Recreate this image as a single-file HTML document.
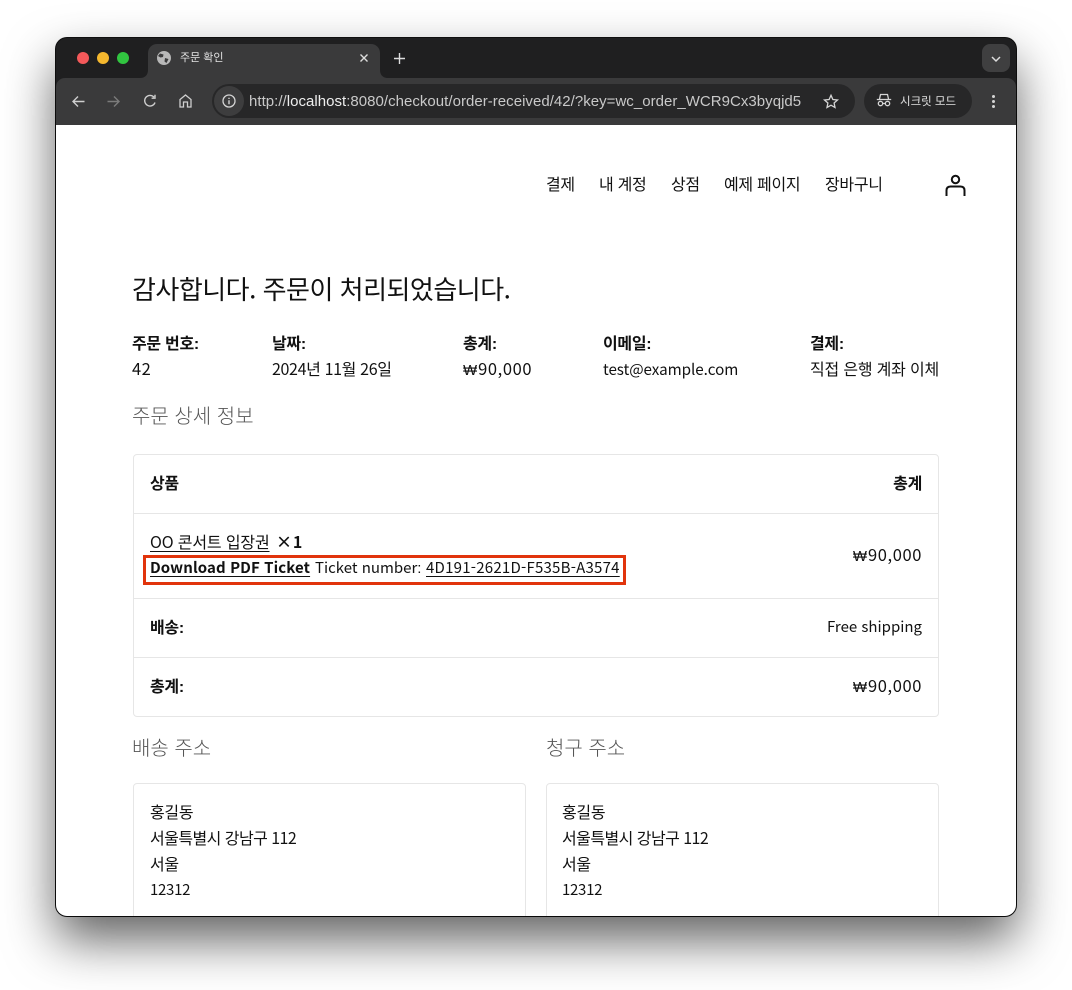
<!DOCTYPE html>
<html lang="ko"><head><meta charset="utf-8"><title>주문 확인</title>
<style>
html,body{margin:0;padding:0;width:1072px;height:990px;overflow:hidden;background:#fff}
*{box-sizing:border-box}
#win{position:absolute;left:56px;top:38px;width:960px;height:878px;border-radius:11px;box-shadow:0 24px 50px rgba(0,0,0,.62),0 0 0 1px #111;overflow:hidden;background:#1f1f20}
.t{position:absolute;white-space:nowrap;font-family:"Noto Sans CJK KR","Liberation Sans",sans-serif;font-size:16px;line-height:22px;color:#111;letter-spacing:-.3px}
.b{font-weight:700}
.u{text-decoration:underline;text-underline-offset:3px;text-decoration-thickness:1px}
.h{font-size:20px;font-weight:300;color:#555;line-height:28px;letter-spacing:0}
.box{position:absolute;border:1px solid #e6e6e6;border-radius:4px}
.ln{position:absolute;height:1px;background:#e6e6e6}
.c{position:absolute;white-space:nowrap;font-family:"Liberation Sans","Noto Sans CJK KR",sans-serif;color:#d9d9d9}
.m{font-size:16.5px;letter-spacing:.6px}
.m i{font-style:normal;font-family:"Liberation Sans","DejaVu Sans",sans-serif;font-size:15px;letter-spacing:1px}
.k{font-family:"Liberation Sans",sans-serif}
svg{position:absolute;overflow:visible}
</style></head><body>
<div id="win">
 <div style="position:absolute;left:0;top:40px;width:960px;height:47px;background:#3a3a3b;border-radius:9px 9px 0 0"></div>
 <div style="position:absolute;left:92px;top:6px;width:232px;height:36px;background:#3a3a3b;border-radius:9px 9px 0 0"></div>
 <svg style="left:84px;top:32px" width="8" height="8"><path d="M8 0V8H0C5 8 8 5 8 0Z" fill="#3a3a3b"/></svg>
 <svg style="left:324px;top:32px" width="8" height="8"><path d="M0 0V8H8C3 8 0 5 0 0Z" fill="#3a3a3b"/></svg>
 <div style="position:absolute;left:21px;top:14px;width:12px;height:12px;border-radius:50%;background:#f4595a"></div>
 <div style="position:absolute;left:41px;top:14px;width:12px;height:12px;border-radius:50%;background:#f5b82e"></div>
 <div style="position:absolute;left:61px;top:14px;width:12px;height:12px;border-radius:50%;background:#31c540"></div>
 <svg style="left:101px;top:13px" width="14" height="14" viewBox="0 0 14 14"><circle cx="7" cy="7" r="7" fill="#b8b8b8"/><path d="M3 2.500 6.500 3.500 6 6 3.500 6.500 1 5ZM8 7l3.500 1-2 4-2-1.500Z" fill="#3a3a3b"/></svg>
 <div class="c" style="left:124px;top:13px;font-size:11px;line-height:15px;color:#e3e3e3">주문 확인</div>
 <svg style="left:304px;top:16px" width="8" height="8"><path d="M.5.5 7.500 7.500M7.500.5.5 7.500" stroke="#ddd" stroke-width="1.400"/></svg>
 <svg style="left:338px;top:15px" width="11" height="11"><path d="M5.500 0V11M0 5.500H11" stroke="#ddd" stroke-width="1.400"/></svg>
 <div style="position:absolute;left:926px;top:6px;width:28px;height:28px;border-radius:8px;background:#3f3f40"></div>
 <svg style="left:935px;top:18px" width="10" height="6"><path d="M1 1 5 5 9 1" fill="none" stroke="#ddd" stroke-width="1.500"/></svg>

 <svg style="left:16px;top:57px" width="13" height="13"><path d="M12.500 6.500H1M6 1.500 1 6.500 6 11.500" fill="none" stroke="#cfcfcf" stroke-width="1.400"/></svg>
 <svg style="left:51px;top:57px" width="13" height="13"><path d="M.5 6.500H12M7 1.500 12 6.500 7 11.500" fill="none" stroke="#7b7b7b" stroke-width="1.400"/></svg>
 <svg style="left:87px;top:56px" width="14" height="14" viewBox="0 0 14 14"><path d="M12 8.500A5.300 5.300 0 1 1 11 3.200M12 .8V4.200H8.600" fill="none" stroke="#cfcfcf" stroke-width="1.400"/></svg>
 <svg style="left:123px;top:56px" width="13" height="14" viewBox="0 0 13 14"><path d="M1 13V5.500L6.500 1 12 5.500V13H8.500V8H4.500V13Z" fill="none" stroke="#cfcfcf" stroke-width="1.300"/></svg>
 <div style="position:absolute;left:156px;top:46px;width:643px;height:34px;border-radius:17px;background:#272728"></div>
 <div style="position:absolute;left:158px;top:48px;width:30px;height:30px;border-radius:15px;background:#3d3d3e"></div>
 <svg style="left:166px;top:56px" width="14" height="14" viewBox="0 0 14 14"><circle cx="7" cy="7" r="6" fill="none" stroke="#d5d5d5" stroke-width="1.300"/><path d="M7 6.200V10.200M7 3.800V5" stroke="#d5d5d5" stroke-width="1.400"/></svg>
 <div class="c" style="left:193px;top:55px;font-size:15px;line-height:18px;color:#c9c9c9;letter-spacing:.03px">http://<span style="color:#eee">localhost</span>:8080/checkout/order-received/42/?key=wc_order_WCR9Cx3byqjd5</div>
 <svg style="left:767px;top:56px" width="16" height="15" viewBox="0 0 16 15"><path d="M8 1.300 9.900 5.500 14.500 6 11.100 9 12 13.500 8 11.200 4 13.500 4.900 9 1.500 6 6.100 5.500Z" fill="none" stroke="#d5d5d5" stroke-width="1.300"/></svg>
 <div style="position:absolute;left:808px;top:46px;width:108px;height:34px;border-radius:17px;background:#272728"></div>
 <svg style="left:820px;top:55px" width="16" height="15" viewBox="0 0 16 15"><path d="M3.500 6 4.500 1.500H11.500L12.500 6M.8 6.500H15.200" fill="none" stroke="#d5d5d5" stroke-width="1.300"/><circle cx="4.500" cy="10.500" r="2.200" fill="none" stroke="#d5d5d5" stroke-width="1.300"/><circle cx="11.500" cy="10.500" r="2.200" fill="none" stroke="#d5d5d5" stroke-width="1.300"/><path d="M6.700 10.500H9.300" stroke="#d5d5d5" stroke-width="1.200"/></svg>
 <div class="c" style="left:844px;top:56px;font-size:11.500px;line-height:16px;color:#e0e0e0">시크릿 모드</div>
 <div style="position:absolute;left:936px;top:57px;width:3px;height:3px;border-radius:50%;background:#d5d5d5;box-shadow:0 5px 0 #d5d5d5,0 10px 0 #d5d5d5"></div>

 <div style="position:absolute;left:0;top:87px;width:960px;height:791px;background:#fff"></div>
</div>

<div class="t" style="left:546px;top:172px">결제</div>
<div class="t" style="left:599px;top:172px">내 계정</div>
<div class="t" style="left:671px;top:172px">상점</div>
<div class="t" style="left:724px;top:172px">예제 페이지</div>
<div class="t" style="left:825px;top:172px">장바구니</div>
<svg style="left:945px;top:174px" width="22" height="23" viewBox="0 0 22 23"><circle cx="10.500" cy="5.500" r="3.700" fill="none" stroke="#111" stroke-width="2"/><path d="M1.500 22V16.500Q1.500 12.500 5.500 12.500H15.500Q19.500 12.500 19.500 16.500V22" fill="none" stroke="#111" stroke-width="2"/></svg>

<div class="t" style="left:132px;top:270px;font-size:26px;line-height:38px;letter-spacing:-.5px">감사합니다. 주문이 처리되었습니다.</div>

<div class="t b" style="left:132px;top:331px">주문 번호<span class="k">:</span></div>
<div class="t" style="left:132px;top:357px;font-size:16.500px;letter-spacing:.5px">42</div>
<div class="t b" style="left:272px;top:331px">날짜<span class="k">:</span></div>
<div class="t" style="left:272px;top:357px;letter-spacing:-.35px">2024년 11월 26일</div>
<div class="t b" style="left:463px;top:331px">총계<span class="k">:</span></div>
<div class="t m" style="left:463px;top:357px"><i>₩</i>90,000</div>
<div class="t b" style="left:603px;top:331px">이메일<span class="k">:</span></div>
<div class="t" style="left:603px;top:358px;font-size:15.200px;letter-spacing:-.05px">test@example.com</div>
<div class="t b" style="left:810px;top:331px">결제<span class="k">:</span></div>
<div class="t" style="left:810px;top:357px;letter-spacing:-.2px">직접 은행 계좌 이체</div>

<div class="t h" style="left:132px;top:401px">주문 상세 정보</div>

<div class="box" style="left:133px;top:454px;width:806px;height:263px"></div>
<div class="ln" style="left:134px;top:513px;width:804px"></div>
<div class="ln" style="left:134px;top:598px;width:804px"></div>
<div class="ln" style="left:134px;top:657px;width:804px"></div>
<div class="t b" style="left:150px;top:471px">상품</div>
<div class="t b" style="right:150px;top:471px">총계</div>
<div class="t u" style="left:150px;top:530px;letter-spacing:-.15px">OO 콘서트 입장권</div>
<div class="t b" style="left:276px;top:530px;word-spacing:-3px">× 1</div>
<div style="position:absolute;left:143px;top:555px;width:483px;height:30px;border:3px solid #e1340c"></div>
<div class="t b u" style="left:150px;top:557px;font-size:15px;letter-spacing:.1px">Download PDF Ticket</div>
<div class="t" style="left:315px;top:557px;font-size:15px;letter-spacing:0">Ticket number<span class="k">:</span></div>
<div class="t u" style="left:426px;top:557px;font-size:15px;letter-spacing:.23px">4D191-2621D-F535B-A3574</div>
<div class="t m" style="right:150px;top:543px"><i>₩</i>90,000</div>
<div class="t b" style="left:150px;top:615px">배송<span class="k">:</span></div>
<div class="t" style="right:150px;top:616px;font-size:15px;letter-spacing:0">Free shipping</div>
<div class="t b" style="left:150px;top:674px">총계<span class="k">:</span></div>
<div class="t m" style="right:150px;top:674px"><i>₩</i>90,000</div>

<div class="t h" style="left:132px;top:733px">배송 주소</div>
<div class="t h" style="left:546px;top:733px">청구 주소</div>

<div style="position:absolute;left:56px;top:770px;width:960px;height:146px;overflow:hidden;border-radius:0 0 11px 11px">
 <div class="box" style="left:77px;top:13px;width:393px;height:200px"></div>
 <div class="box" style="left:490px;top:13px;width:393px;height:200px"></div>
 <div class="t" style="left:94px;top:30px">홍길동</div>
 <div class="t" style="left:94px;top:56px;letter-spacing:-.55px">서울특별시 강남구 112</div>
 <div class="t" style="left:94px;top:82px">서울</div>
 <div class="t" style="left:94px;top:109px;font-size:15px;letter-spacing:-.3px">12312</div>
 <div class="t" style="left:506px;top:30px">홍길동</div>
 <div class="t" style="left:506px;top:56px;letter-spacing:-.55px">서울특별시 강남구 112</div>
 <div class="t" style="left:506px;top:82px">서울</div>
 <div class="t" style="left:506px;top:109px;font-size:15px;letter-spacing:-.3px">12312</div>
</div>
</body></html>
